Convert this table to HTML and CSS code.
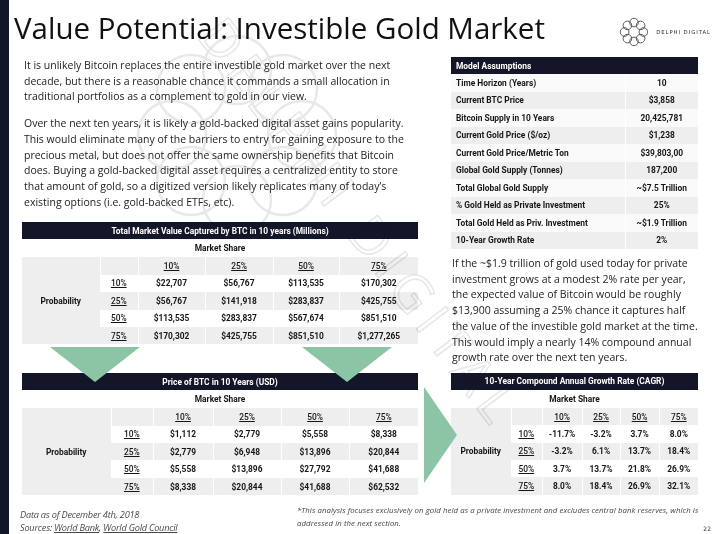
FILE: index.html
```html
<!DOCTYPE html>
<html lang="en">
<head>
<meta charset="utf-8">
<title>Value Potential: Investible Gold Market</title>
<link rel="stylesheet" href="styles.css">
</head>
<body>
<div class="slide">
  <div class="edge"></div>
  <div class="page">
    <header class="top">
      <h1 class="title">Value Potential: Investible Gold Market</h1>
      <div class="brand">
        <svg class="brand-mark" viewBox="0 0 30 30" aria-hidden="true">
          <g fill="none" stroke="#4a4a4a" stroke-width="0.9">
            <circle cx="15" cy="5.6" r="4.3"/>
            <circle cx="21.6" cy="8.4" r="4.3"/>
            <circle cx="24.4" cy="15" r="4.3"/>
            <circle cx="21.6" cy="21.6" r="4.3"/>
            <circle cx="15" cy="24.4" r="4.3"/>
            <circle cx="8.4" cy="21.6" r="4.3"/>
            <circle cx="5.6" cy="15" r="4.3"/>
            <circle cx="8.4" cy="8.4" r="4.3"/>
          </g>
        </svg>
        <span class="brand-name">DELPHI DIGITAL</span>
      </div>
    </header>

    <main class="cols">
      <section class="left">
        <p class="text p1">It is unlikely Bitcoin replaces the entire investible gold market over the next<br>decade, but there is a reasonable chance it commands a small allocation in<br>traditional portfolios as a complement to gold in our view.</p>
        <p class="text p2">Over the next ten years, it is likely a gold-backed digital asset gains popularity.<br>This would eliminate many of the barriers to entry for gaining exposure to the<br>precious metal, but does not offer the same ownership benefits that Bitcoin<br>does. Buying a gold-backed digital asset requires a centralized entity to store<br>that amount of gold, so a digitized version likely replicates many of today’s<br>existing options (i.e. gold-backed ETFs, etc).</p>

        <table class="grid t1">
          <colgroup><col class="c78"><col class="c38"><col class="c67"><col class="c68"><col class="c66"><col class="c79"></colgroup>
          <tr><th class="head" colspan="6">Total Market Value Captured by BTC in 10 years (Millions)</th></tr>
          <tr><td class="ms" colspan="6">Market Share</td></tr>
          <tr class="g"><td class="prob" rowspan="5">Probability</td><td></td><td class="pct">10%</td><td class="pct">25%</td><td class="pct">50%</td><td class="pct">75%</td></tr>
          <tr><td class="pct">10%</td><td>$22,707</td><td>$56,767</td><td>$113,535</td><td>$170,302</td></tr>
          <tr class="g"><td class="pct">25%</td><td>$56,767</td><td>$141,918</td><td>$283,837</td><td>$425,755</td></tr>
          <tr><td class="pct">50%</td><td>$113,535</td><td>$283,837</td><td>$567,674</td><td>$851,510</td></tr>
          <tr class="g"><td class="pct">75%</td><td>$170,302</td><td>$425,755</td><td>$851,510</td><td>$1,277,265</td></tr>
        </table>

        <table class="grid t2">
          <colgroup><col class="c89"><col class="c42"><col class="c60"><col class="c68"><col class="c68"><col class="c69"></colgroup>
          <tr><th class="head" colspan="6">Price of BTC in 10 Years (USD)</th></tr>
          <tr><td class="ms" colspan="6">Market Share</td></tr>
          <tr class="g"><td class="prob" rowspan="5">Probability</td><td></td><td class="pct">10%</td><td class="pct">25%</td><td class="pct">50%</td><td class="pct">75%</td></tr>
          <tr><td class="pct">10%</td><td>$1,112</td><td>$2,779</td><td>$5,558</td><td>$8,338</td></tr>
          <tr class="g"><td class="pct">25%</td><td>$2,779</td><td>$6,948</td><td>$13,896</td><td>$20,844</td></tr>
          <tr><td class="pct">50%</td><td>$5,558</td><td>$13,896</td><td>$27,792</td><td>$41,688</td></tr>
          <tr class="g"><td class="pct">75%</td><td>$8,338</td><td>$20,844</td><td>$41,688</td><td>$62,532</td></tr>
        </table>
      </section>

      <section class="right">
        <table class="model">
          <colgroup><col class="c174"><col class="c73"></colgroup>
          <tr><th class="head mhead" colspan="2">Model Assumptions</th></tr>
          <tr><td>Time Horizon (Years)</td><td>10</td></tr>
          <tr class="g"><td>Current BTC Price</td><td>$3,858</td></tr>
          <tr><td>Bitcoin Supply in 10 Years</td><td>20,425,781</td></tr>
          <tr class="g"><td>Current Gold Price ($/oz)</td><td>$1,238</td></tr>
          <tr><td>Current Gold Price/Metric Ton</td><td>$39,803,00</td></tr>
          <tr class="g"><td>Global Gold Supply (Tonnes)</td><td>187,200</td></tr>
          <tr><td>Total Global Gold Supply</td><td>~$7.5 Trillion</td></tr>
          <tr class="g"><td>% Gold Held as Private Investment</td><td>25%</td></tr>
          <tr><td>Total Gold Held as Priv. Investment</td><td>~$1.9 Trillion</td></tr>
          <tr class="g"><td>10-Year Growth Rate</td><td>2%</td></tr>
        </table>

        <p class="text p3">If the ~$1.9 trillion of gold used today for private<br>investment grows at a modest 2% rate per year,<br>the expected value of Bitcoin would be roughly<br>$13,900 assuming a 25% chance it captures half<br>the value of the investible gold market at the time.<br>This would imply a nearly 14% compound annual<br>growth rate over the next ten years.</p>

        <table class="grid t3">
          <colgroup><col class="c60"><col class="c31"><col class="c40"><col class="c38"><col class="c39"><col class="c39"></colgroup>
          <tr><th class="head" colspan="6">10-Year Compound Annual Growth Rate (CAGR)</th></tr>
          <tr><td class="ms" colspan="6">Market Share</td></tr>
          <tr class="g"><td class="prob" rowspan="5">Probability</td><td></td><td class="pct">10%</td><td class="pct">25%</td><td class="pct">50%</td><td class="pct">75%</td></tr>
          <tr><td class="pct">10%</td><td>-11.7%</td><td>-3.2%</td><td>3.7%</td><td>8.0%</td></tr>
          <tr class="g"><td class="pct">25%</td><td>-3.2%</td><td>6.1%</td><td>13.7%</td><td>18.4%</td></tr>
          <tr><td class="pct">50%</td><td>3.7%</td><td>13.7%</td><td>21.8%</td><td>26.9%</td></tr>
          <tr class="g"><td class="pct">75%</td><td>8.0%</td><td>18.4%</td><td>26.9%</td><td>32.1%</td></tr>
        </table>
      </section>
    </main>

    <footer class="foot">
      <div class="src">
        <div>Data as of December 4th, 2018</div>
        <div>Sources: <u>World Bank</u>, <u>World Gold Council</u></div>
      </div>
      <div class="note">*This analysis focuses exclusively on gold held as a private investment and excludes central bank reserves, which is<br>addressed in the next section.</div>
      <div class="num">22</div>
    </footer>
  </div>

  <svg class="watermark" viewBox="0 0 720 534" aria-hidden="true">
    <g fill="none" stroke="#e8e8e8" stroke-width="2.5">
      <circle cx="237" cy="70" r="34"/>
      <circle cx="283" cy="89" r="34"/>
      <circle cx="302" cy="135" r="34"/>
      <circle cx="283" cy="181" r="34"/>
      <circle cx="237" cy="200" r="34"/>
      <circle cx="191" cy="181" r="34"/>
      <circle cx="172" cy="135" r="34"/>
      <circle cx="191" cy="89" r="34"/>
    </g>
    <text x="0" y="0" transform="translate(196,36) rotate(53)" font-family="Open Sans, sans-serif" font-size="52" letter-spacing="8" fill="none" stroke="#e6e6e6" stroke-width="1.4">DELPHI DIGITAL</text>
  </svg>

  <svg class="arrows" viewBox="0 0 720 534" aria-hidden="true">
    <g fill="#8cc4a6">
      <polygon points="50,347 140,347 95,382"/>
      <polygon points="302,347 392,347 347,382"/>
      <polygon points="424,387 457,435 424,483"/>
    </g>
  </svg>
</div>
</body>
</html>
```

FILE: styles.css
```css
* { box-sizing: border-box; }

html, body {
  margin: 0;
  padding: 0;
}

body {
  width: 720px;
  height: 534px;
  overflow: hidden;
  background: #ffffff;
  font-family: "Open Sans", "Liberation Sans", sans-serif;
  color: #1f1f1f;
}

.slide {
  position: relative;
  width: 720px;
  height: 534px;
  display: flex;
  overflow: hidden;
  background: #ffffff;
}

.edge {
  flex: none;
  width: 9px;
  background: #121628;
}

.page {
  flex: 1;
  display: flex;
  flex-direction: column;
  position: relative;
  z-index: 1;
}

/* header */
.top {
  height: 57px;
  flex: none;
  display: flex;
  justify-content: space-between;
  align-items: flex-start;
  padding: 0 9px 0 5px;
}

.title {
  margin: 0;
  padding-top: 13px;
  font-family: "Open Sans", sans-serif;
  font-weight: 400;
  font-size: 29.5px;
  line-height: 1;
  color: #111111;
  white-space: nowrap;
}

.brand {
  display: flex;
  align-items: center;
  gap: 7px;
  padding-top: 17px;
}

.brand-mark {
  width: 30px;
  height: 30px;
  display: block;
}

.brand-name {
  font-family: "DejaVu Sans", sans-serif;
  font-size: 5.4px;
  letter-spacing: 0.9px;
  color: #333333;
  white-space: nowrap;
}

/* columns */
.cols {
  flex: none;
  height: 437px;
  display: flex;
  gap: 33px;
  padding-left: 13px;
}

.left {
  width: 396px;
  display: flex;
  flex-direction: column;
}

.right {
  width: 247px;
  display: flex;
  flex-direction: column;
}

.text {
  margin: 0;
  font-size: 10.5px;
  line-height: 15.7px;
  color: #222222;
  white-space: nowrap;
}

.left .text { padding-left: 2px; }
.p1 { margin-top: 1px; }
.p2 { margin-top: 11px; }
.p3 { margin-top: 7px; padding-left: 1px; }

/* tables */
table {
  border-collapse: collapse;
  table-layout: fixed;
  width: 100%;
  font-family: Roboto, "Liberation Sans", sans-serif;
  font-weight: 700;
  font-size: 8.4px;
  color: #161616;
}

td, th {
  padding: 0;
  height: 17.4px;
  text-align: center;
  vertical-align: middle;
  white-space: nowrap;
  border-left: 1px solid #ffffff;
}

td:first-child, th:first-child { border-left: 0; }

.head {
  height: 17px;
  background: #121628;
  color: #ffffff;
  font-weight: 700;
}

.ms { height: 18px; background: #ffffff; }

.g td { background: #eeeeee; }
.prob { background: #eeeeee; }

.pct {
  font-weight: 500;
  text-decoration: underline;
}

.t1 { margin-top: 12px; }
.t2 { margin-top: 29px; }
.t3 { margin-top: 7px; }

.model td { height: 17.5px; background: #fafafa; }
.model .g td { background: #eeeeee; }
.model td:first-child { text-align: left; padding-left: 5px; }
.model .mhead { text-align: left; padding-left: 5px; }

.c31 { width: 31px; }
.c38 { width: 38px; }
.c39 { width: 39px; }
.c40 { width: 40px; }
.c42 { width: 42px; }
.c60 { width: 60px; }
.c66 { width: 66px; }
.c67 { width: 67px; }
.c68 { width: 68px; }
.c69 { width: 69px; }
.c73 { width: 73px; }
.c78 { width: 78px; }
.c79 { width: 79px; }
.c89 { width: 89px; }
.c174 { width: 174px; }

/* footer */
.foot {
  flex: 1;
  display: flex;
  padding-left: 11px;
  font-style: italic;
}

.src {
  width: 277px;
  flex: none;
  padding-top: 14px;
  font-size: 9.2px;
  letter-spacing: -0.22px;
  line-height: 13.4px;
  color: #4a4a4a;
}

.note {
  flex: 1;
  padding-top: 10px;
  font-size: 7.8px;
  letter-spacing: 0.07px;
  line-height: 13px;
  color: #444444;
  white-space: nowrap;
}

.num {
  flex: none;
  align-self: flex-end;
  padding: 0 9px 3px 0;
  font-style: normal;
  font-family: "DejaVu Sans", sans-serif;
  font-size: 6px;
  color: #333333;
}

/* overlays */
.watermark {
  position: absolute;
  left: 0;
  top: 0;
  width: 720px;
  height: 534px;
  z-index: 2;
  pointer-events: none;
  mix-blend-mode: multiply;
}

.arrows {
  position: absolute;
  left: 0;
  top: 0;
  width: 720px;
  height: 534px;
  z-index: 3;
  pointer-events: none;
}
```
